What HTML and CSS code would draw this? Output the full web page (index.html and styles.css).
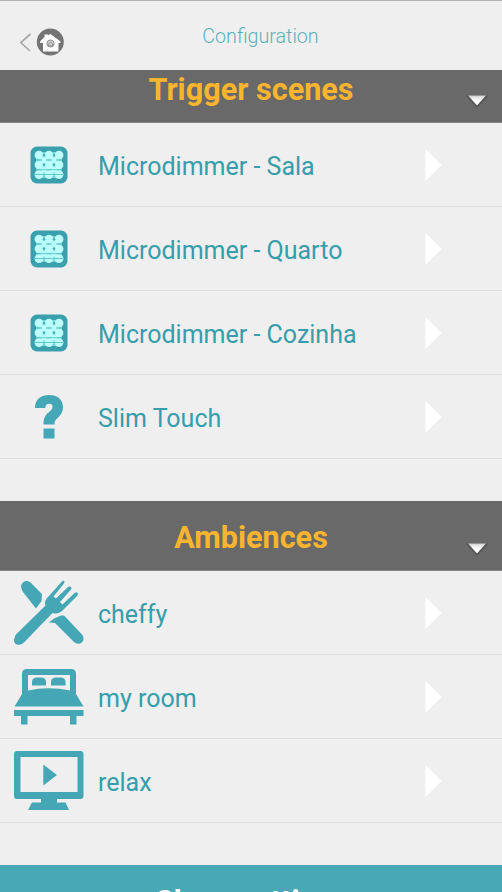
FILE: index.html
```html
<!DOCTYPE html>
<html lang="en">
<head>
<meta charset="utf-8">
<title>Configuration</title>
<link rel="stylesheet" href="styles.css">
</head>
<body>
<svg width="0" height="0" class="defs" aria-hidden="true">
  <defs>
    <symbol id="dimmer" viewBox="0 0 38 38">
      <rect x=".5" y=".5" width="37" height="37" rx="6.500" fill="#3ba0ad"/>
      <rect x="6" y="6" width="26" height="26" fill="#6fd3d7"/>
      <g fill="#bdfffc">
        <circle cx="9" cy="9.200" r="4.400"/><circle cx="19" cy="9.200" r="4.400"/><circle cx="29" cy="9.200" r="4.400"/>
        <circle cx="9" cy="18.800" r="4.400"/><circle cx="19" cy="18.800" r="4.400"/><circle cx="29" cy="18.800" r="4.400"/>
        <circle cx="9" cy="28.600" r="4.400"/><circle cx="19" cy="28.600" r="4.400"/><circle cx="29" cy="28.600" r="4.400"/>
        <path d="M10 14l4-3.500 4 3.500-4 3.500zM20 14l4-3.500 4 3.500-4 3.500zM10 23.700l4-3.500 4 3.500-4 3.500zM20 23.700l4-3.500 4 3.500-4 3.500z"/>
      </g>
      <path d="M12.300 9.200l1.700-1.500 1.700 1.500-1.700 1.500zM22.300 9.200l1.700-1.500 1.700 1.500-1.700 1.500zM12.300 18.800l1.700-1.500 1.700 1.500-1.700 1.500zM22.300 18.800l1.700-1.500 1.700 1.500-1.700 1.500z" fill="#43aeb8"/>
      <path d="M6 14h6M16 14h6M26 14h6M6 23.700h26M5 28.500h28" stroke="#4ab9c0" stroke-width=".8"/>
    </symbol>
    <symbol id="next" viewBox="0 0 18 34"><path d="M1.300 .8L17.500 17L1.300 33.200z" fill="#fff"/></symbol>
    <linearGradient id="shade" x2="0" y2="1"><stop stop-color="#ccc"/><stop offset=".45" stop-color="#fff"/></linearGradient>
    <symbol id="down" viewBox="0 0 24 16">
      <path d="M2.500 2.500h19L12 13z" fill="#4c4c4c" stroke="#555" stroke-width="1.500"/>
      <path d="M3 1.500h18L12 11.500z" fill="url(#shade)"/>
    </symbol>
  </defs>
</svg>
<header class="topbar">
  <svg class="nav" width="52" height="34" viewBox="0 0 52 34">
    <path d="M12.500 9L2.800 17.500L12 26" fill="none" stroke="#a8a8a8" stroke-width="1.700"/>
    <circle cx="32.300" cy="17" r="13.500" fill="#747474"/>
    <path d="M22 16.500L26.500 12V9.500h3.500v.8L32.500 9L42.500 16.500V18H40.500v8.500H25V18h-3z" fill="#fff"/>
    <circle cx="32.500" cy="18.500" r="3.600" fill="#ccc" stroke="#909090"/>
    <path d="M30.500 19l2-2 2 2v2h-4z" fill="none" stroke="#888" stroke-width=".8"/>
  </svg>
  <h1 class="title">Configuration</h1>
</header>
<main>
  <section class="group">
    <h2 class="bar bar-short"><span class="bar-text">Trigger scenes</span><svg class="down"><use href="#down"/></svg></h2>
    <ul class="list">
      <li class="row"><span class="icon"><svg width="38" height="38"><use href="#dimmer"/></svg></span><span class="label">Microdimmer - Sala</span><svg class="next"><use href="#next"/></svg></li>
      <li class="row"><span class="icon"><svg width="38" height="38"><use href="#dimmer"/></svg></span><span class="label">Microdimmer - Quarto</span><svg class="next"><use href="#next"/></svg></li>
      <li class="row"><span class="icon"><svg width="38" height="38"><use href="#dimmer"/></svg></span><span class="label">Microdimmer - Cozinha</span><svg class="next"><use href="#next"/></svg></li>
      <li class="row"><span class="icon"><svg width="30" height="46" viewBox="0 0 30 46"><path d="M1 14C1 5 7 1 15 1C23.500 1 29 5.500 29 13C29 18 26.500 21.500 23.500 24C21 26 20.500 27.500 20.500 30.500H9.500C9.500 24 11 21.500 14.500 18.500C17 16.500 18.500 15.500 18.500 12.800C18.500 11 17.500 9.800 15.300 9.800C12.700 9.800 11.500 11 11.300 14zM9.500 34.500h11V44.500h-11z" fill="#45a7b5"/></svg></span><span class="label">Slim Touch</span><svg class="next"><use href="#next"/></svg></li>
    </ul>
  </section>
  <section class="group">
    <h2 class="bar"><span class="bar-text">Ambiences</span><svg class="down"><use href="#down"/></svg></h2>
    <ul class="list">
      <li class="row"><span class="icon"><svg width="70" height="66" viewBox="0 0 70 66" fill="#45a7b5">
        <path d="M9 12C3 3 13-3 18 4L28 14L27.500 21L22 28.500z"/>
        <path d="M35 42.500L40 38.500L47 35.500H50L68 54.500C72.500 60 66 67 60 62L41 43z"/>
        <path d="M1.500 55L31.500 25.500C30 22 32 19 34.500 16.500L47.500 2C49-.5 51.500 1.500 50 3.500L39.500 16.500L42 18.500L54 7C56 5.500 58.500 7.500 57 9.500L46 22L48.500 24.500L60.500 13C63.500 11 65 14 63 16L49 30C45 34 42 34 38.500 33L10 62.500C6 66-.5 66 0 59.500z"/>
      </svg></span><span class="label">cheffy</span><svg class="next"><use href="#next"/></svg></li>
      <li class="row"><span class="icon"><svg width="70" height="56" viewBox="0 0 70 56" fill="#45a7b5">
        <path fill-rule="evenodd" d="M8 5Q8 0 13 0H57Q62 0 62 5V25L69.500 37.500H.5L8 25zM14 6V21.500Q35 17 56 21.500V6z"/>
        <path d="M18 16.500V13Q18 8.500 23 8.500H27Q32 8.500 32 13V16.500zM37 16.500V13Q37 8.500 42 8.500H46.500Q51.500 8.500 51.500 13V16.500zM0 41H69.500V47H62.500V55.500H56V47H13.500V55.500H7V47H0z"/>
      </svg></span><span class="label">my room</span><svg class="next"><use href="#next"/></svg></li>
      <li class="row"><span class="icon"><svg width="70" height="60" viewBox="0 0 70 60" fill="#45a7b5">
        <path fill-rule="evenodd" d="M3 0H66.500Q69.500 0 69.500 3V45Q69.500 48 66.500 48H3Q0 48 0 45V3Q0 0 3 0zM6.500 6V41H63.500V6z"/>
        <path d="M29.300 13.500L43 24L29.300 34.500zM27 47H43V51.500H51.500L55 59H14L18 51.500H27z"/>
      </svg></span><span class="label">relax</span><svg class="next"><use href="#next"/></svg></li>
    </ul>
  </section>
  <section class="group"><h2 class="bar bar-teal"><span class="bar-text">Show settings</span></h2></section>
</main>
</body>
</html>
```
FILE: styles.css
```css
* { box-sizing: border-box; }
body {
  display: flex;
  flex-direction: column;
  margin: 0;
  height: 892px;
  overflow: hidden;
  background: #efefef;
  font-family: Roboto, sans-serif;
  color: #369daa;
}
main { flex: 1; min-height: 0; overflow: hidden; }
h1, h2, ul { margin: 0; padding: 0; }
.defs { position: absolute; }
.topbar {
  display: grid;
  grid-template-columns: 70px 1fr 70px;
  height: 70px;
  border-top: 1px solid #b4b4b4;
}
.nav { margin: 24px 0 0 18px; }
.title {
  margin-top: 23px;
  padding-left: 19px;
  text-align: center;
  font-size: 19.7px;
  line-height: 26px;
  font-weight: 300;
  color: #5fafb9;
}
.group { margin-bottom: 42px; }
.bar {
  display: grid;
  grid-template-columns: 40px 1fr 40px;
  height: 70px;
  background: #696969;
  border-bottom: 1px solid #858585;
  color: #fbb42d;
  font-size: 30.6px;
  line-height: 36px;
  font-weight: 700;
}
.bar-text {
  grid-column: 2;
  margin-top: 19px;
  text-align: center;
}
.bar-short { height: 53px; }
.bar-short .bar-text { margin-top: 2px; }
.down { width: 24px; height: 16px; align-self: end; margin: 0 0 12px 3px; }
.bar-teal { background: #48a8b5; color: #fff; }
.bar-teal .bar-text { padding-left: 3px; }
.list { list-style: none; }
.row {
  display: grid;
  grid-template-columns: 98px 1fr 18px;
  align-items: center;
  height: 84px;
  padding-right: 60px;
  border-bottom: 1px solid #dfdfdf;
}
.icon { display: flex; justify-content: center; }
.label { font-size: 25px; line-height: 32px; padding-top: 5px; }
.next { width: 18px; height: 34px; }
```
